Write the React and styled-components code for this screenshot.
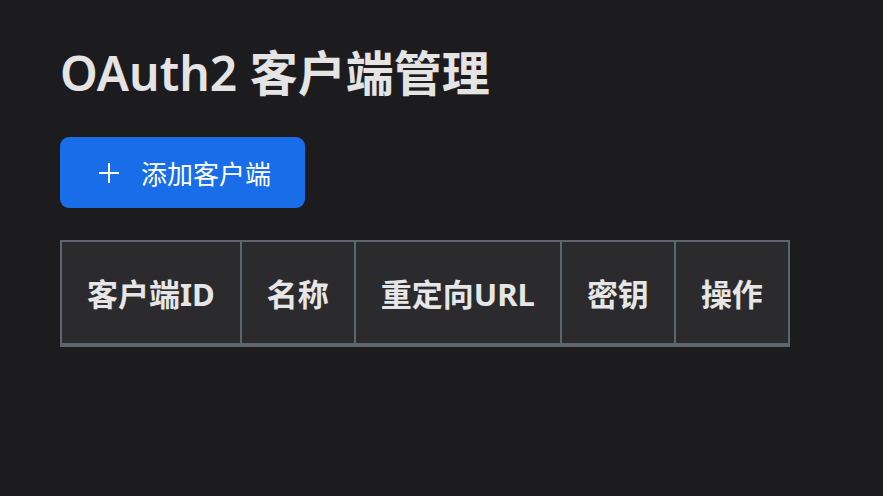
import styled, { createGlobalStyle } from "styled-components";

const GlobalStyle = createGlobalStyle`
  html, body {
    margin: 0;
    padding: 0;
    background: #1c1c1e;
  }
  body {
    font-family: "Noto Sans", "Noto Sans CJK SC", sans-serif;
    color: #e6e6e6;
  }
`;

const columns = ["客户端ID", "名称", "重定向URL", "密钥", "操作"];

const App = () => {
  return (
    <Page>
      <GlobalStyle />
      <Title>OAuth2 客户端管理</Title>
      <AddButton>
        <svg width="24" height="24" viewBox="0 0 24 24">
          <path d="M12 2v20M2 12h20" stroke="#fff" strokeWidth="2" fill="none" />
        </svg>
        添加客户端
      </AddButton>
      <Table>
        <thead>
          <tr>
            {columns.map((c) => (
              <Th key={c}>{c}</Th>
            ))}
          </tr>
        </thead>
        <tbody></tbody>
      </Table>
    </Page>
  );
};

export default App;

const Page = styled.div`
  padding: 38px 60px;
  min-height: 100vh;
  box-sizing: border-box;
  display: flex;
  flex-direction: column;
  align-items: flex-start;
`;

const Title = styled.h1`
  margin: 0 0 30px;
  font-size: 48px;
  font-weight: 600;
  line-height: 69px;
  color: #e4e4e4;
`;

const AddButton = styled.button`
  display: flex;
  align-items: center;
  gap: 20px;
  height: 71px;
  padding: 0 34px 0 37px;
  border: none;
  border-radius: 9px;
  background: #1a6de8;
  color: #fff;
  font-family: inherit;
  font-size: 26px;
  font-weight: 400;
  cursor: pointer;
`;

const Table = styled.table`
  margin-top: 32px;
  border-collapse: collapse;
  border: 2px solid #5e656f;
  border-bottom-width: 4px;
`;

const Th = styled.th`
  background: #2b2b2d;
  border: 2px solid #5e656f;
  border-bottom-width: 4px;
  padding: 0 25px;
  height: 101px;
  font-size: 31px;
  font-weight: 700;
  color: #e6e6e6;
  white-space: nowrap;
`;
